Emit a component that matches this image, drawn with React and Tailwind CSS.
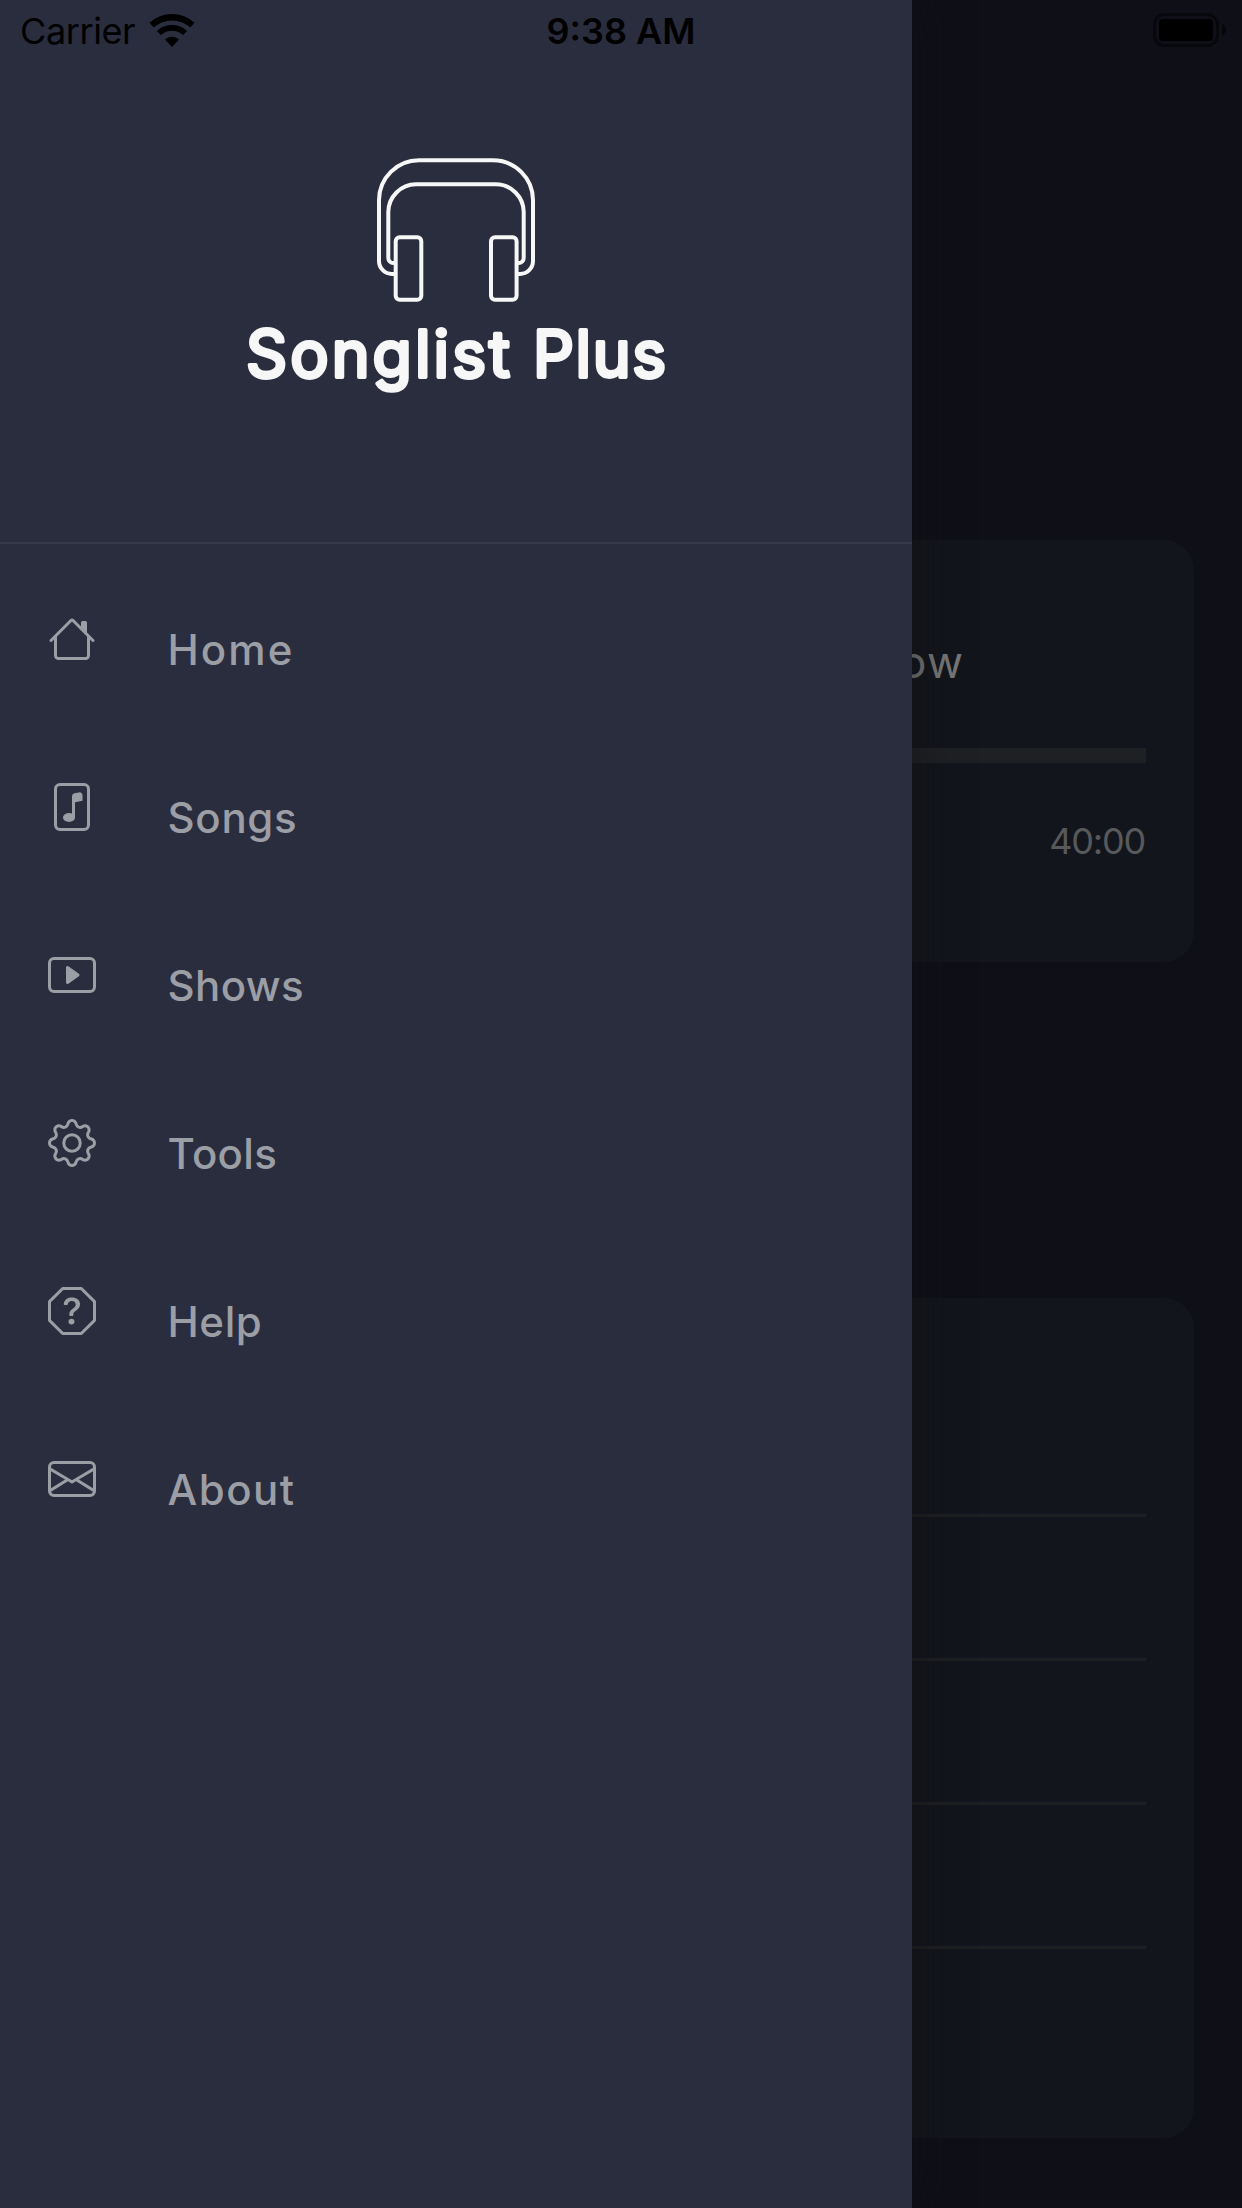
import React from "react";
import { BsFileMusic, BsPlayBtn, BsGear, BsQuestionOctagon, BsEnvelope } from "react-icons/bs";

function HouseIcon({ className }) {
  return (
    <svg className={className} viewBox="0 0 16 16" fill="currentColor">
      <path
        fillRule="evenodd"
        d="M2 13.5V7h1v6.5a.5.5 0 0 0 .5.5h9a.5.5 0 0 0 .5-.5V7h1v6.5a1.5 1.5 0 0 1-1.5 1.5h-9A1.5 1.5 0 0 1 2 13.5zm11-11V6l-2-2V2.5a.5.5 0 0 1 .5-.5h1a.5.5 0 0 1 .5.5z"
      />
      <path
        fillRule="evenodd"
        d="M7.293 1.5a1 1 0 0 1 1.414 0l6.647 6.646a.5.5 0 0 1-.708.708L8 2.207 1.354 8.854a.5.5 0 1 1-.708-.708L7.293 1.5z"
      />
    </svg>
  );
}

const items = [
  { label: "Home", Icon: HouseIcon, tracking: "tracking-[2.1px]" },
  { label: "Songs", Icon: BsFileMusic, tracking: "tracking-[0.7px]" },
  { label: "Shows", Icon: BsPlayBtn, tracking: "tracking-[0.4px]" },
  { label: "Tools", Icon: BsGear, tracking: "tracking-[0.3px]" },
  { label: "Help", Icon: BsQuestionOctagon, tracking: "tracking-[0.6px]" },
  { label: "About", Icon: BsEnvelope, tracking: "tracking-[1.5px]" },
];

function Logo() {
  return (
    <svg className="h-[250px] w-[440px]" viewBox="236 150 440 250">
      <g fill="none" stroke="#f7f7f7" strokeWidth="4">
        <path d="M396 274H392A13 13 0 0 1 379 261V200A40 40 0 0 1 419 160.3H493A40 40 0 0 1 533 200V261A13 13 0 0 1 520 274H516" />
        <path d="M396 263H393.5A5 5 0 0 1 388.3 258V212A28 28 0 0 1 416 184.3H496A28 28 0 0 1 523.7 212V258A5 5 0 0 1 518.5 263H516" />
        <rect x="395.7" y="237.3" width="25.6" height="62.4" rx="4" />
        <rect x="491" y="237.3" width="25.6" height="62.4" rx="4" />
      </g>
      <g
        fill="#f7f7f7"
        stroke="#f7f7f7"
        strokeWidth="3.8"
        strokeLinejoin="round"
        className="font-['Inter',sans-serif] text-[64px] font-normal"
      >
        <text x="246" y="376.5" textLength="264">Songlist</text>
        <text x="533" y="376.5" textLength="133">Plus</text>
      </g>
    </svg>
  );
}

function StatusBar() {
  return (
    <header className="absolute inset-x-0 top-0 z-10 grid h-[60px] grid-cols-3 items-center text-[36px] leading-[57px] text-black">
      <div className="flex items-center gap-[13px] pl-[20px]">
        <span className="pt-[3px] tracking-[-0.4px]">Carrier</span>
        <svg className="h-[34px] w-[48px]" viewBox="-24 0 48 34" fill="none" stroke="black">
          <path d="M-20.3 12.2A29.8 29.8 0 0 1 20.3 12.2" strokeWidth="6.4" />
          <path d="M-13.1 20A19.2 19.2 0 0 1 13.1 20" strokeWidth="5.8" />
          <path d="M-7 26.4A10.3 10.3 0 0 1 7 26.4L0 34Z" fill="black" stroke="none" />
        </svg>
      </div>
      <span className="pt-[3px] text-center font-semibold">9:38 AM</span>
      <div className="flex justify-end pr-[15px]">
        <svg className="h-[34px] w-[74px]" viewBox="0 0 74 34">
          <rect x="1.5" y="1.5" width="63" height="31" rx="10" fill="none" stroke="#08080c" strokeWidth="3" />
          <rect x="6" y="6" width="54" height="22" rx="4" fill="black" />
          <path d="M69 11C74 13 74 21 69 23Z" fill="#060609" />
        </svg>
      </div>
    </header>
  );
}

export default function App() {
  return (
    <div className="relative flex h-[2208px] w-[1242px] overflow-hidden bg-[#0f0f18] font-['Inter',sans-serif]">
      <StatusBar />

      <aside className="z-[1] flex w-[912px] shrink-0 flex-col bg-[#2a2d3e] shadow-[0_0_44px_0_rgba(16,16,16,0.6)]">
        <div className="flex h-[544px] justify-center border-b-2 border-[#373949] pt-[150px]">
          <Logo />
        </div>
        <nav className="flex flex-col pt-[71px]">
          {items.map(({ label, Icon, tracking }) => (
            <a key={label} className="flex h-[168px] items-start gap-[71.5px] pl-[48px] text-[#9c9ea6]">
              <Icon className="size-[48px]" />
              <span className={`mt-[11px] text-[42px] leading-[48px] font-medium ${tracking}`}>{label}</span>
            </a>
          ))}
        </nav>
      </aside>

      <main className="flex min-w-0 flex-1 flex-col pt-[540px] pr-[48px]">
        <section className="flex h-[422px] flex-col rounded-r-[30px] bg-[#12151b] pr-[48px]">
          <p className="mt-[96px] -ml-[12px] text-[44px] leading-[52px] tracking-[1.5px] text-[#767677]">ow</p>
          <div className="mt-[60px] h-[15px] bg-[#1f2024]" />
          <p className="mt-[56px] mr-px self-end text-[36px] leading-[44px] tracking-[-1.2px] text-[#58595b]">40:00</p>
        </section>
        <section className="mt-[336px] flex h-[840px] flex-col gap-[141px] rounded-r-[30px] bg-[#12151b] pt-[216px] pr-[48px]">
          <hr className="h-[3px] border-0 bg-[#1e1f22]" />
          <hr className="h-[3px] border-0 bg-[#1e1f22]" />
          <hr className="h-[3px] border-0 bg-[#1e1f22]" />
          <hr className="h-[3px] border-0 bg-[#1e1f22]" />
        </section>
      </main>
    </div>
  );
}
